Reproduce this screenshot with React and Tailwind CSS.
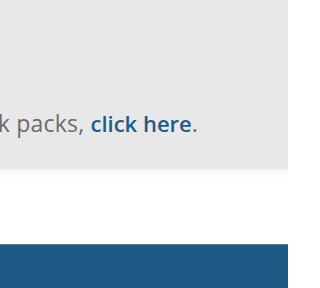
import React from "react";

export default function App() {
  return (
    <div className="w-[288px] h-[288px] overflow-hidden flex flex-col bg-white" style={{ fontFamily: '"Open Sans", sans-serif' }}>
      <section className="h-[169px] bg-[#e8e8e8] flex items-start justify-end overflow-hidden pr-[90px] pt-[107px]">
        <p className="whitespace-nowrap text-[23px] leading-[32px] tracking-[0.2px] text-[#6b6b6b]">
          To order bulk packs,{" "}
          <a href="#" className="text-[22px] tracking-normal font-semibold text-[#1f5b8c]">click here</a>.
        </p>
      </section>
      <div className="h-[75px] bg-gradient-to-b from-[#f4f4f4] to-white to-[12%]" />
      <footer className="flex-1 bg-[#1d5a86] border-t border-[#5d7f98]" />
    </div>
  );
}
